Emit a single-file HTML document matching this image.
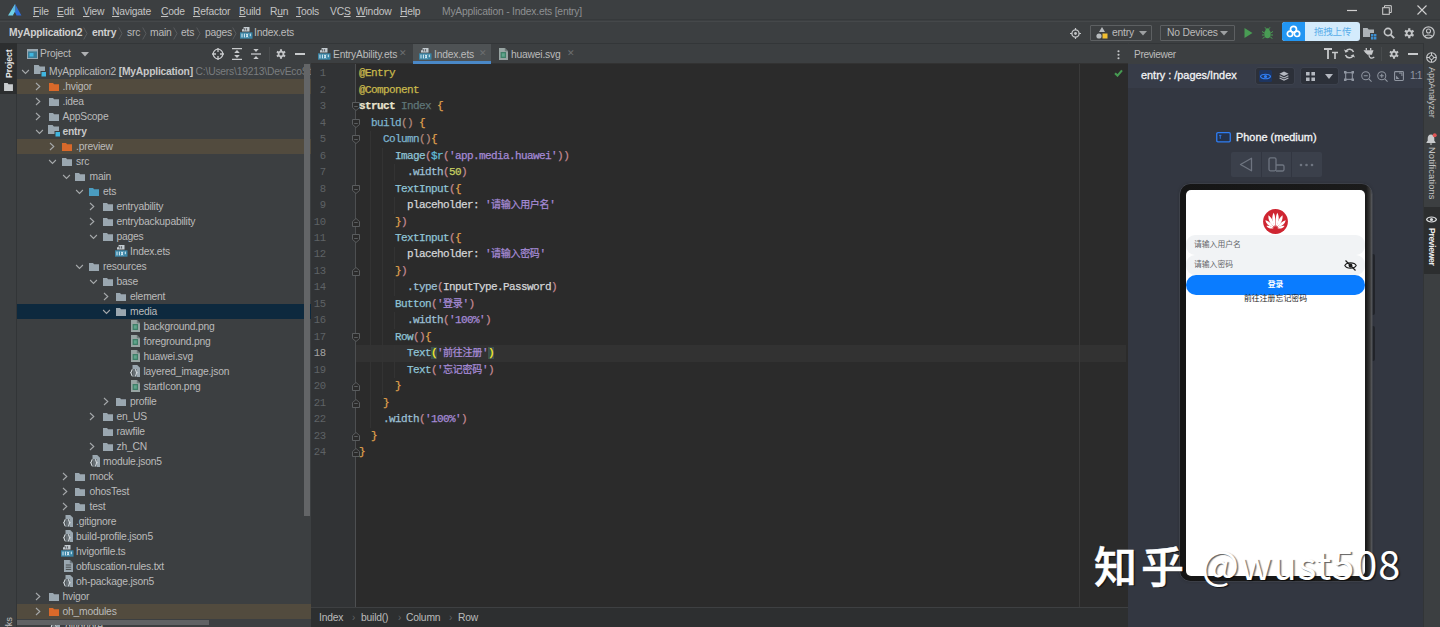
<!DOCTYPE html>
<html lang="zh">
<head>
<meta charset="utf-8">
<title>MyApplication - Index.ets [entry]</title>
<style>
*{box-sizing:border-box}
html,body{margin:0;padding:0}
body{width:1440px;height:627px;overflow:hidden;position:relative;background:#3c3f41;color:#bbbbbb;
 font-family:"Liberation Sans","Noto Sans CJK SC",sans-serif;font-size:10.3px;line-height:15px}
.abs{position:absolute}
.ic{position:absolute;display:block}
/* menubar */
#menubar{position:absolute;left:0;top:0;width:1440px;height:22px;background:#3c3f41}
#menubar span{position:absolute;top:4px;font-size:10.3px;color:#c4c4c4;white-space:nowrap;letter-spacing:-.2px}
#menubar u{text-decoration:underline;text-underline-offset:1px}
#menubar .ttl{color:#8e9092}
#navbar{position:absolute;left:0;top:22px;width:1440px;height:21px;background:#3c3f41;border-top:1px solid transparent}
#navline{position:absolute;left:0;top:19px;width:1440px;height:1px;background:#36393b}
#navline2{position:absolute;left:0;top:21px;width:1440px;height:1px;background:#45484a}
#navbar span{position:absolute;top:1.5px;font-size:10.3px;color:#bbbbbb;white-space:nowrap;letter-spacing:-.2px}
#navbar b{color:#d0d0d0}
#navbar .sep{color:#6e7173;font-size:12px;top:1px}
/* left strip */
#lstrip{position:absolute;left:0;top:43px;width:17px;height:584px;background:#3c3f41;border-right:1px solid #323537}
#lstrip .seltab{position:absolute;left:0;top:0;width:17px;height:51px;background:#2c2e2f}
.vtxt{position:absolute;white-space:nowrap;font-size:10.3px;transform-origin:0 0}
/* project panel */
#proj{position:absolute;left:17px;top:43px;width:294px;height:584px;background:#3c3f41;overflow:hidden}
#projhead{position:absolute;left:0;top:0;width:294px;height:21px;background:#3c3f41;border-top:1px solid #333638}
#tree{position:absolute;left:-17px;top:-43px;width:328px;height:700px}
.row{position:absolute;left:17px;width:294px;height:15px;margin-left:-17px;padding-left:0}
.row{left:17px;margin-left:0}
.row .ic{margin-left:-17px}
.row .t{position:absolute;top:0;margin-left:-17px;white-space:nowrap;font-size:10.3px;line-height:15px;color:#bbbbbb;letter-spacing:-.2px}
.row b{color:#c8c8c8}
.row.ex{background:#524b3e}
.row.sel{background:#0d293e}
.pth{color:#7a7d7f}
/* editor */
#tabs{position:absolute;left:311px;top:43px;width:817px;height:21px;background:#3c3f41;border-top:1px solid #333638;border-bottom:1px solid #323232}
#tabs span{position:absolute;top:3px;font-size:10.3px;white-space:nowrap;letter-spacing:-.2px;color:#bbbbbb}
#tabs .x{color:#6c6f71;font-size:9px;top:2px}
#tabs .act{position:absolute;left:101.5px;top:0;width:78.5px;height:20px;background:#4e5254;border-bottom:3px solid #4a88c7}
#editor{position:absolute;left:311px;top:64px;width:817px;height:543px;background:#2b2b2b;overflow:hidden}
#gutter{position:absolute;left:0;top:0;width:45px;height:543px;background:#313335;border-right:1px solid #4d4f51}
#curline{position:absolute;left:45px;top:281.3px;width:770px;height:16.5px;background:#323232}
#margin{position:absolute;left:768px;top:0;width:1px;height:543px;background:#3a3a3a}
.ln{position:absolute;left:0;width:14.500px;margin-top:-64px;text-align:right;font-family:"Liberation Mono",monospace;font-size:10.6px;letter-spacing:-.5px;line-height:16.5px;color:#5e6265}
.ln.cur{color:#a4a3a3}
.fd{position:absolute;left:40.5px;margin-top:-64px}
.cl{position:absolute;left:48px;margin-top:-64px;white-space:pre;font-family:"Liberation Mono","Noto Sans CJK SC",monospace;font-size:11px;letter-spacing:-.6px;line-height:16.5px;color:#c8ccd0}
.cj{font-size:10px;letter-spacing:-.3px}
.cl{-webkit-text-stroke:.25px}
.an{color:#c7b84c}.kw{color:#e8e2cd;font-weight:bold}.un{color:#5f7678}.b1{color:#e0a34e}.b2{color:#b58a7e}.b3{color:#c58a93}.b4{color:#c58a93}
.fn{color:#7db5cf}.cm{color:#8fc4d6}.rr{color:#62bcd8}.st{color:#a58ad6}.pr{color:#9cc0d6}.nu{color:#c6cf62}.id{color:#d4d6d8}
.bm{color:#ffef28;background:#3b514d}
.guide{position:absolute;width:1px;background:#333333}
#crumbs{position:absolute;left:311px;top:607px;width:817px;height:20px;background:#2d2f30;border-top:1px solid #3e4042}
#crumbs span{position:absolute;top:2px;font-size:10.3px;color:#bbbbbb;letter-spacing:-.2px}
#crumbs .s{color:#606366;font-size:10px}
/* previewer */
#pvhead{position:absolute;left:1128px;top:43px;width:295px;height:21px;background:#3c3f41;border-top:1px solid #333638;border-left:1px solid transparent}
#pvbar{position:absolute;left:1128px;top:64px;width:295px;height:24px;background:#373c48;border-left:1px solid transparent}
#pvbody{position:absolute;left:1128px;top:88px;width:295px;height:539px;background:#333741;border-left:1px solid transparent;border-top:1px solid transparent}
#rstrip{position:absolute;left:1423px;top:43px;width:18px;height:584px;background:#3c3f41;border-left:1px solid #323537}
#rstrip .seltab{position:absolute;left:0;top:163.5px;width:18px;height:67.5px;background:#2c2e2f}
</style>
</head>
<body>
<!-- MENU BAR -->
<div id="menubar">
 <svg class="ic" style="left:8.300px;top:4.200px" width="13.400" height="11.600" viewBox="0 0 13.400 11.600"><path d="M7.100 0L0 11.600h5.200l1.900-3.300z" fill="#6fd0e6"/><path d="M7.100 0l6.300 11.600H8.300L6.600 8.300 8.300 5.400z" fill="#2f6fdb"/><path d="M7.100 0L4.200 4.900l2.900 3.400 1.400-2.600z" fill="#4aa3e3" opacity=".55"/><path d="M6.700 8.100l2 3.500H4.900z" fill="#3c3f41"/></svg>
 <span style="left:33px"><u>F</u>ile</span><span style="left:57px"><u>E</u>dit</span><span style="left:83px"><u>V</u>iew</span><span style="left:112px"><u>N</u>avigate</span><span style="left:161px"><u>C</u>ode</span><span style="left:193px"><u>R</u>efactor</span><span style="left:239px"><u>B</u>uild</span><span style="left:270px">R<u>u</u>n</span><span style="left:296px"><u>T</u>ools</span><span style="left:330px">VC<u>S</u></span><span style="left:356px"><u>W</u>indow</span><span style="left:400px"><u>H</u>elp</span>
 <span class="ttl" style="left:442px">MyApplication - Index.ets [entry]</span>
 <svg class="ic" style="left:1347px;top:5px" width="10" height="10" viewBox="0 0 10 10"><path d="M0 5.5h10" stroke="#d0d0d0" stroke-width="1.2"/></svg>
 <svg class="ic" style="left:1382px;top:5px" width="10" height="10" viewBox="0 0 10 10"><path d="M2.5 2.5V.7h6.8v6.8H7.5" stroke="#d0d0d0" fill="none"/><rect x=".7" y="2.7" width="6.6" height="6.6" stroke="#d0d0d0" fill="none"/></svg>
 <svg class="ic" style="left:1417px;top:5px" width="10" height="10" viewBox="0 0 10 10"><path d="M.5.5l9 9M9.5.5l-9 9" stroke="#d0d0d0" stroke-width="1.1"/></svg>
</div>
<div id="navline"></div><div id="navline2"></div>
<!-- NAV BAR -->
<div id="navbar">
 <span style="left:9px"><b>MyApplication2</b></span><svg class="ic" style="left:83px;top:4px" width="5" height="13" viewBox="0 0 5 13"><path d="M.7.5l3.300 6-3.300 6" stroke="#585b5d" stroke-width="1" fill="none"/></svg>
 <span style="left:92px"><b>entry</b></span><svg class="ic" style="left:118px;top:4px" width="5" height="13" viewBox="0 0 5 13"><path d="M.7.5l3.300 6-3.300 6" stroke="#585b5d" stroke-width="1" fill="none"/></svg>
 <span style="left:127px">src</span><svg class="ic" style="left:142px;top:4px" width="5" height="13" viewBox="0 0 5 13"><path d="M.7.5l3.300 6-3.300 6" stroke="#585b5d" stroke-width="1" fill="none"/></svg>
 <span style="left:150px">main</span><svg class="ic" style="left:173px;top:4px" width="5" height="13" viewBox="0 0 5 13"><path d="M.7.5l3.300 6-3.300 6" stroke="#585b5d" stroke-width="1" fill="none"/></svg>
 <span style="left:181px">ets</span><svg class="ic" style="left:196px;top:4px" width="5" height="13" viewBox="0 0 5 13"><path d="M.7.5l3.300 6-3.300 6" stroke="#585b5d" stroke-width="1" fill="none"/></svg>
 <span style="left:205px">pages</span><svg class="ic" style="left:232px;top:4px" width="5" height="13" viewBox="0 0 5 13"><path d="M.7.5l3.300 6-3.300 6" stroke="#585b5d" stroke-width="1" fill="none"/></svg>
 <svg class="ic" style="left:240px;top:4px" width="12.500" height="12" viewBox="0 0 12.500 12"><path d="M2 4.600V2.300h1.600V0h5.900v4.600z" fill="#c3cbd0"/><path d="M4.700 1.200v2.300M6.600 1.200v2.300" stroke="#3c3f41" stroke-width=".800"/><rect x="0" y="5.300" width="12.500" height="6.400" fill="#3a85a6"/><path d="M2 6.600v3.800M4.400 6.600v3.800M6.200 6.600l1.800 3.800M8 6.600l-1.800 3.800M10.300 6.600v2.600" stroke="#d9edf6" stroke-width="1"/></svg>
 <span style="left:254px">Index.ets</span>
 
 <svg class="ic" style="left:1070px;top:5px" width="11" height="11" viewBox="0 0 11 11"><circle cx="5.5" cy="5.5" r="3.6" stroke="#c4c6c8" stroke-width="1.3" fill="none"/><circle cx="5.5" cy="5.5" r="1.4" fill="#c4c6c8"/><path d="M5.5 0v2M5.5 9v2M0 5.5h2M9 5.5h2" stroke="#c4c6c8" stroke-width="1.2"/></svg>
 <div class="abs" style="left:1090px;top:2px;width:62px;height:16px;border:1px solid #5d6062;border-radius:1px"></div>
 <svg class="ic" style="left:1096px;top:4px" width="12" height="12" viewBox="0 0 12 12"><path d="M6 0l3 5H3z" fill="#b8bcbf"/><circle cx="3" cy="9" r="2.6" fill="#b8bcbf"/><rect x="6.5" y="6.5" width="5" height="5" fill="#f2c032"/></svg>
 <span style="left:1112px">entry</span>
 <svg class="ic" style="left:1139px;top:8px" width="8" height="5" viewBox="0 0 8 5"><path d="M0 0h8L4 4.5z" fill="#9da0a2"/></svg>
 <div class="abs" style="left:1160px;top:2px;width:75px;height:16px;border:1px solid #5d6062;border-radius:1px"></div>
 <span style="left:1167px">No Devices</span>
 <svg class="ic" style="left:1220px;top:8px" width="8" height="5" viewBox="0 0 8 5"><path d="M0 0h8L4 4.5z" fill="#9da0a2"/></svg>
 <svg class="ic" style="left:1244px;top:5px" width="9" height="10" viewBox="0 0 9 10"><path d="M.5 0l8 5-8 5z" fill="#499c54"/></svg>
 <svg class="ic" style="left:1262px;top:4px" width="11" height="12" viewBox="0 0 11 12"><ellipse cx="5.5" cy="7" rx="3.2" ry="4.2" fill="#499c54"/><path d="M3.3 3.4a2.2 2.2 0 014.4 0z" fill="#499c54"/><path d="M0 4.5l2.5 1.5M11 4.5L8.500 6M0 8h2.400M11 8H8.600M.6 11.500l2.200-1.600M10.400 11.500l-2.200-1.600M3 .3l1.100 1.500M8 .3L6.900 1.800" stroke="#499c54" stroke-width="1"/></svg>
 <div class="abs" style="left:1282px;top:-1px;width:78px;height:19px;background:#d3ebfc;border-radius:3px"></div>
 <div class="abs" style="left:1282px;top:-1px;width:23px;height:19px;background:#2296f3;border-radius:3px 0 0 3px"></div>
 <svg class="ic" style="left:1286px;top:2px" width="15" height="13" viewBox="0 0 15 13"><circle cx="7.500" cy="4.300" r="3" stroke="#fff" stroke-width="1.700" fill="none"/><circle cx="4" cy="8.800" r="2.700" stroke="#fff" stroke-width="1.700" fill="none"/><circle cx="11" cy="8.800" r="2.700" stroke="#fff" stroke-width="1.700" fill="none"/></svg>
 <span style="left:1314px;top:1px;font-size:9.500px;color:#5aaeea;letter-spacing:-.2px">拖拽上传</span>
 <svg class="ic" style="left:1363px;top:5px" width="14" height="12" viewBox="0 0 14 12"><path d="M0 0h4.500l1.200 1.500H11V9H0z" fill="#aeb3b7"/><rect x="7" y="5" width="7" height="7" fill="#3c3f41"/><path d="M8 6h2.400v2.400H8zM11 6h2.400v2.400H11zM8 9h2.400v2.400H8zM11 9h2.400v2.400H11z" fill="#3d8fd1"/></svg>
 <svg class="ic" style="left:1383px;top:4px" width="12" height="12" viewBox="0 0 12 12"><circle cx="5" cy="5" r="3.600" stroke="#c4c6c8" stroke-width="1.600" fill="none"/><path d="M7.600 7.600l3.600 3.600" stroke="#c4c6c8" stroke-width="1.900"/></svg>
 <svg class="ic" style="left:1404px;top:5px" width="10.5" height="10.5" viewBox="0 0 11 11"><path d="M4.32 1.99L4.34 0.33L6.66 0.33L6.68 1.99L7.95 2.72L9.40 1.91L10.56 3.92L9.13 4.77L9.13 6.23L10.56 7.08L9.40 9.09L7.95 8.28L6.68 9.01L6.66 10.67L4.34 10.67L4.32 9.01L3.05 8.28L1.60 9.09L0.44 7.08L1.87 6.23L1.87 4.77L0.44 3.92L1.60 1.91L3.05 2.72z" fill="#c4c6c8"/><circle cx="5.5" cy="5.5" r="1.75" fill="#3c3f41"/></svg>
 <svg class="ic" style="left:1422px;top:3px" width="13" height="13" viewBox="0 0 13 13"><circle cx="6.500" cy="6.500" r="5.700" stroke="#c4c6c8" stroke-width="1.200" fill="none"/><circle cx="6.500" cy="5" r="2" stroke="#c4c6c8" stroke-width="1.100" fill="none"/><path d="M2.700 10.600c.8-2.200 6.800-2.200 7.600 0" stroke="#c4c6c8" stroke-width="1.100" fill="none"/></svg>

</div>
<!-- LEFT STRIP -->
<div id="lstrip">
 <div class="seltab"></div>
 <div class="vtxt" style="left:1.5px;top:35px;transform:rotate(-90deg);color:#e8e8e8;font-weight:bold;font-size:8.8px;letter-spacing:-.2px">Project</div>
 <svg class="ic" style="left:4px;top:39.5px" width="9" height="8" viewBox="0 0 10 9"><path d="M0 0h4l1 1.4H10V9H0z" fill="#c8ccce"/></svg>
 <div class="vtxt" style="left:1.5px;top:620px;transform:rotate(-90deg);color:#c0c0c0;font-size:9.2px">Bookmarks</div>
</div>
<!-- PROJECT PANEL -->
<div id="proj">
 <div id="tree">
<div class="row" style="top:64px"><svg class="ic" style="left:21.0px;top:5px" width="9" height="6" viewBox="0 0 9 6"><path d="M1.100 1l3.400 3.400L7.900 1" stroke="#a6a9ab" stroke-width="1.100" fill="none"/></svg><svg class="ic" style="left:34px;top:1px" width="13" height="12" viewBox="0 0 13 12"><path d="M0 0h4.6l1.2 1.4H11V9H0z" fill="#9aa7b0"/><rect x="6.5" y="6" width="6" height="6" fill="#3c3f41"/><rect x="7.5" y="7" width="4.5" height="4.5" fill="#40b6e0"/></svg><span class="t" style="left:49.0px">MyApplication2 <b>[MyApplication]</b> <span class="pth">C:\Users\19213\DevEcoSt</span></span></div>
<div class="row ex" style="top:79px"><svg class="ic" style="left:35.0px;top:3px" width="7" height="9" viewBox="0 0 7 9"><path d="M1 1l3.800 3.500L1 8" stroke="#a6a9ab" stroke-width="1.100" fill="none"/></svg><svg class="ic" style="left:48.5px;top:3.5px" width="10.5" height="8.300" viewBox="0 0 12 10" preserveAspectRatio="none"><path d="M0 0h4.6l1.200 1.400H12V10H0z" fill="#d9692a"/></svg><span class="t" style="left:62.5px">.hvigor</span></div>
<div class="row" style="top:94px"><svg class="ic" style="left:35.0px;top:3px" width="7" height="9" viewBox="0 0 7 9"><path d="M1 1l3.800 3.500L1 8" stroke="#a6a9ab" stroke-width="1.100" fill="none"/></svg><svg class="ic" style="left:48.5px;top:3.5px" width="10.5" height="8.300" viewBox="0 0 12 10" preserveAspectRatio="none"><path d="M0 0h4.6l1.200 1.400H12V10H0z" fill="#9aa7b0"/></svg><span class="t" style="left:62.5px">.idea</span></div>
<div class="row" style="top:109px"><svg class="ic" style="left:35.0px;top:3px" width="7" height="9" viewBox="0 0 7 9"><path d="M1 1l3.800 3.500L1 8" stroke="#a6a9ab" stroke-width="1.100" fill="none"/></svg><svg class="ic" style="left:48.5px;top:3.5px" width="10.5" height="8.300" viewBox="0 0 12 10" preserveAspectRatio="none"><path d="M0 0h4.6l1.200 1.400H12V10H0z" fill="#9aa7b0"/></svg><span class="t" style="left:62.5px">AppScope</span></div>
<div class="row" style="top:124px"><svg class="ic" style="left:34.5px;top:5px" width="9" height="6" viewBox="0 0 9 6"><path d="M1.100 1l3.400 3.400L7.900 1" stroke="#a6a9ab" stroke-width="1.100" fill="none"/></svg><svg class="ic" style="left:48px;top:1px" width="13" height="12" viewBox="0 0 13 12"><path d="M0 0h4.6l1.2 1.4H11V9H0z" fill="#9aa7b0"/><rect x="6.5" y="6" width="6" height="6" fill="#3c3f41"/><rect x="7.5" y="7" width="4.5" height="4.5" fill="#40b6e0"/></svg><span class="t" style="left:62.5px"><b>entry</b></span></div>
<div class="row ex" style="top:139px"><svg class="ic" style="left:48.5px;top:3px" width="7" height="9" viewBox="0 0 7 9"><path d="M1 1l3.800 3.500L1 8" stroke="#a6a9ab" stroke-width="1.100" fill="none"/></svg><svg class="ic" style="left:61.5px;top:3.5px" width="10.5" height="8.300" viewBox="0 0 12 10" preserveAspectRatio="none"><path d="M0 0h4.6l1.200 1.400H12V10H0z" fill="#d9692a"/></svg><span class="t" style="left:76.0px">.preview</span></div>
<div class="row" style="top:154px"><svg class="ic" style="left:48.0px;top:5px" width="9" height="6" viewBox="0 0 9 6"><path d="M1.100 1l3.400 3.400L7.900 1" stroke="#a6a9ab" stroke-width="1.100" fill="none"/></svg><svg class="ic" style="left:61.5px;top:3.5px" width="10.5" height="8.300" viewBox="0 0 12 10" preserveAspectRatio="none"><path d="M0 0h4.6l1.200 1.400H12V10H0z" fill="#9aa7b0"/></svg><span class="t" style="left:76.0px">src</span></div>
<div class="row" style="top:169px"><svg class="ic" style="left:61.5px;top:5px" width="9" height="6" viewBox="0 0 9 6"><path d="M1.100 1l3.400 3.400L7.900 1" stroke="#a6a9ab" stroke-width="1.100" fill="none"/></svg><svg class="ic" style="left:74.5px;top:3.5px" width="10.5" height="8.300" viewBox="0 0 12 10" preserveAspectRatio="none"><path d="M0 0h4.6l1.200 1.400H12V10H0z" fill="#9aa7b0"/></svg><span class="t" style="left:89.5px">main</span></div>
<div class="row" style="top:184px"><svg class="ic" style="left:75.0px;top:5px" width="9" height="6" viewBox="0 0 9 6"><path d="M1.100 1l3.400 3.400L7.900 1" stroke="#a6a9ab" stroke-width="1.100" fill="none"/></svg><svg class="ic" style="left:88.5px;top:3.5px" width="10.5" height="8.300" viewBox="0 0 12 10" preserveAspectRatio="none"><path d="M0 0h4.6l1.200 1.400H12V10H0z" fill="#4a9cc0"/></svg><span class="t" style="left:103.0px">ets</span></div>
<div class="row" style="top:199px"><svg class="ic" style="left:89.0px;top:3px" width="7" height="9" viewBox="0 0 7 9"><path d="M1 1l3.800 3.500L1 8" stroke="#a6a9ab" stroke-width="1.100" fill="none"/></svg><svg class="ic" style="left:102.5px;top:3.5px" width="10.5" height="8.300" viewBox="0 0 12 10" preserveAspectRatio="none"><path d="M0 0h4.6l1.200 1.400H12V10H0z" fill="#9aa7b0"/></svg><span class="t" style="left:116.5px">entryability</span></div>
<div class="row" style="top:214px"><svg class="ic" style="left:89.0px;top:3px" width="7" height="9" viewBox="0 0 7 9"><path d="M1 1l3.800 3.500L1 8" stroke="#a6a9ab" stroke-width="1.100" fill="none"/></svg><svg class="ic" style="left:102.5px;top:3.5px" width="10.5" height="8.300" viewBox="0 0 12 10" preserveAspectRatio="none"><path d="M0 0h4.6l1.200 1.400H12V10H0z" fill="#9aa7b0"/></svg><span class="t" style="left:116.5px">entrybackupability</span></div>
<div class="row" style="top:229px"><svg class="ic" style="left:88.5px;top:5px" width="9" height="6" viewBox="0 0 9 6"><path d="M1.100 1l3.400 3.400L7.900 1" stroke="#a6a9ab" stroke-width="1.100" fill="none"/></svg><svg class="ic" style="left:102.5px;top:3.5px" width="10.5" height="8.300" viewBox="0 0 12 10" preserveAspectRatio="none"><path d="M0 0h4.6l1.200 1.400H12V10H0z" fill="#9aa7b0"/></svg><span class="t" style="left:116.5px">pages</span></div>
<div class="row" style="top:244px"><svg class="ic" style="left:115px;top:1px" width="12.500" height="12" viewBox="0 0 12.500 12"><path d="M2 4.600V2.300h1.600V0h5.900v4.600z" fill="#c3cbd0"/><path d="M4.700 1.200v2.300M6.600 1.200v2.300" stroke="#3c3f41" stroke-width=".800"/><rect x="0" y="5.300" width="12.500" height="6.400" fill="#3a85a6"/><path d="M2 6.600v3.800M4.400 6.600v3.800M6.200 6.600l1.800 3.800M8 6.600l-1.800 3.800M10.300 6.600v2.600" stroke="#d9edf6" stroke-width="1"/></svg><span class="t" style="left:130.0px">Index.ets</span></div>
<div class="row" style="top:259px"><svg class="ic" style="left:75.0px;top:5px" width="9" height="6" viewBox="0 0 9 6"><path d="M1.100 1l3.400 3.400L7.900 1" stroke="#a6a9ab" stroke-width="1.100" fill="none"/></svg><svg class="ic" style="left:88.5px;top:3.5px" width="10.5" height="8.300" viewBox="0 0 12 10" preserveAspectRatio="none"><path d="M0 0h4.6l1.200 1.400H12V10H0z" fill="#9aa7b0"/></svg><span class="t" style="left:103.0px">resources</span></div>
<div class="row" style="top:274px"><svg class="ic" style="left:88.5px;top:5px" width="9" height="6" viewBox="0 0 9 6"><path d="M1.100 1l3.400 3.400L7.900 1" stroke="#a6a9ab" stroke-width="1.100" fill="none"/></svg><svg class="ic" style="left:102.5px;top:3.5px" width="10.5" height="8.300" viewBox="0 0 12 10" preserveAspectRatio="none"><path d="M0 0h4.6l1.200 1.400H12V10H0z" fill="#9aa7b0"/></svg><span class="t" style="left:116.5px">base</span></div>
<div class="row" style="top:289px"><svg class="ic" style="left:102.5px;top:3px" width="7" height="9" viewBox="0 0 7 9"><path d="M1 1l3.800 3.500L1 8" stroke="#a6a9ab" stroke-width="1.100" fill="none"/></svg><svg class="ic" style="left:115.5px;top:3.5px" width="10.5" height="8.300" viewBox="0 0 12 10" preserveAspectRatio="none"><path d="M0 0h4.6l1.200 1.400H12V10H0z" fill="#9aa7b0"/></svg><span class="t" style="left:130.0px">element</span></div>
<div class="row sel" style="top:304px"><svg class="ic" style="left:102.0px;top:5px" width="9" height="6" viewBox="0 0 9 6"><path d="M1.100 1l3.400 3.400L7.900 1" stroke="#a6a9ab" stroke-width="1.100" fill="none"/></svg><svg class="ic" style="left:115.5px;top:3.5px" width="10.5" height="8.300" viewBox="0 0 12 10" preserveAspectRatio="none"><path d="M0 0h4.6l1.200 1.400H12V10H0z" fill="#9aa7b0"/></svg><span class="t" style="left:130.0px">media</span></div>
<div class="row" style="top:319px"><svg class="ic" style="left:131px;top:1px" width="9" height="12" viewBox="0 0 9 12"><path d="M0 0h5.800L9 3.200V12H0z" fill="#98a5a3"/><path d="M5.800 0v3.200H9z" fill="#6d7a78"/><rect x="1.600" y="4" width="5.400" height="6" fill="#3f7f68"/><rect x="2.800" y="5.300" width="3" height="3.400" fill="#5fa58b"/></svg><span class="t" style="left:143.5px">background.png</span></div>
<div class="row" style="top:334px"><svg class="ic" style="left:131px;top:1px" width="9" height="12" viewBox="0 0 9 12"><path d="M0 0h5.800L9 3.200V12H0z" fill="#98a5a3"/><path d="M5.800 0v3.200H9z" fill="#6d7a78"/><rect x="1.600" y="4" width="5.400" height="6" fill="#3f7f68"/><rect x="2.800" y="5.300" width="3" height="3.400" fill="#5fa58b"/></svg><span class="t" style="left:143.5px">foreground.png</span></div>
<div class="row" style="top:349px"><svg class="ic" style="left:131px;top:1px" width="9" height="12" viewBox="0 0 9 12"><path d="M0 0h5.800L9 3.200V12H0z" fill="#98a5a3"/><path d="M5.800 0v3.200H9z" fill="#6d7a78"/><rect x="1.600" y="4" width="5.400" height="6" fill="#3f7f68"/><rect x="2.800" y="5.300" width="3" height="3.400" fill="#5fa58b"/></svg><span class="t" style="left:143.5px">huawei.svg</span></div>
<div class="row" style="top:364px"><svg class="ic" style="left:130px;top:1px" width="10" height="12" viewBox="0 0 10 12"><path d="M2.500 0h4.700L10 2.800V12H2.500z" fill="#9aa7b0"/><path d="M0 4h7v8H0z" fill="#3c3f41" opacity=".55"/><path d="M2.600 4.600c-1.600 0-.6 2.600-1.900 3.200 1.300.6.300 3.200 1.900 3.200M5 4.600c1.600 0 .6 2.600 1.900 3.200-1.300.6-.3 3.200-1.900 3.200" stroke="#d3dade" stroke-width="1.100" fill="none"/></svg><span class="t" style="left:143.5px">layered_image.json</span></div>
<div class="row" style="top:379px"><svg class="ic" style="left:131px;top:1px" width="9" height="12" viewBox="0 0 9 12"><path d="M0 0h5.800L9 3.200V12H0z" fill="#98a5a3"/><path d="M5.800 0v3.200H9z" fill="#6d7a78"/><rect x="1.600" y="4" width="5.400" height="6" fill="#3f7f68"/><rect x="2.800" y="5.300" width="3" height="3.400" fill="#5fa58b"/></svg><span class="t" style="left:143.5px">startIcon.png</span></div>
<div class="row" style="top:394px"><svg class="ic" style="left:102.5px;top:3px" width="7" height="9" viewBox="0 0 7 9"><path d="M1 1l3.800 3.500L1 8" stroke="#a6a9ab" stroke-width="1.100" fill="none"/></svg><svg class="ic" style="left:115.5px;top:3.5px" width="10.5" height="8.300" viewBox="0 0 12 10" preserveAspectRatio="none"><path d="M0 0h4.6l1.200 1.400H12V10H0z" fill="#9aa7b0"/></svg><span class="t" style="left:130.0px">profile</span></div>
<div class="row" style="top:409px"><svg class="ic" style="left:89.0px;top:3px" width="7" height="9" viewBox="0 0 7 9"><path d="M1 1l3.800 3.500L1 8" stroke="#a6a9ab" stroke-width="1.100" fill="none"/></svg><svg class="ic" style="left:102.5px;top:3.5px" width="10.5" height="8.300" viewBox="0 0 12 10" preserveAspectRatio="none"><path d="M0 0h4.6l1.200 1.400H12V10H0z" fill="#9aa7b0"/></svg><span class="t" style="left:116.5px">en_US</span></div>
<div class="row" style="top:424px"><svg class="ic" style="left:102.5px;top:3.5px" width="10.5" height="8.300" viewBox="0 0 12 10" preserveAspectRatio="none"><path d="M0 0h4.6l1.200 1.400H12V10H0z" fill="#9aa7b0"/></svg><span class="t" style="left:116.5px">rawfile</span></div>
<div class="row" style="top:439px"><svg class="ic" style="left:89.0px;top:3px" width="7" height="9" viewBox="0 0 7 9"><path d="M1 1l3.800 3.500L1 8" stroke="#a6a9ab" stroke-width="1.100" fill="none"/></svg><svg class="ic" style="left:102.5px;top:3.5px" width="10.5" height="8.300" viewBox="0 0 12 10" preserveAspectRatio="none"><path d="M0 0h4.6l1.200 1.400H12V10H0z" fill="#9aa7b0"/></svg><span class="t" style="left:116.5px">zh_CN</span></div>
<div class="row" style="top:454px"><svg class="ic" style="left:90px;top:1px" width="10" height="12" viewBox="0 0 10 12"><path d="M2.500 0h4.700L10 2.800V12H2.500z" fill="#9aa7b0"/><path d="M0 4h7v8H0z" fill="#3c3f41" opacity=".55"/><path d="M2.600 4.600c-1.600 0-.6 2.600-1.900 3.200 1.300.6.300 3.200 1.900 3.200M5 4.600c1.600 0 .6 2.600 1.900 3.200-1.300.6-.3 3.200-1.900 3.200" stroke="#d3dade" stroke-width="1.100" fill="none"/></svg><span class="t" style="left:103.0px">module.json5</span></div>
<div class="row" style="top:469px"><svg class="ic" style="left:62.0px;top:3px" width="7" height="9" viewBox="0 0 7 9"><path d="M1 1l3.800 3.500L1 8" stroke="#a6a9ab" stroke-width="1.100" fill="none"/></svg><svg class="ic" style="left:74.5px;top:3.5px" width="10.5" height="8.300" viewBox="0 0 12 10" preserveAspectRatio="none"><path d="M0 0h4.6l1.200 1.400H12V10H0z" fill="#9aa7b0"/></svg><span class="t" style="left:89.5px">mock</span></div>
<div class="row" style="top:484px"><svg class="ic" style="left:62.0px;top:3px" width="7" height="9" viewBox="0 0 7 9"><path d="M1 1l3.800 3.500L1 8" stroke="#a6a9ab" stroke-width="1.100" fill="none"/></svg><svg class="ic" style="left:74.5px;top:3.5px" width="10.5" height="8.300" viewBox="0 0 12 10" preserveAspectRatio="none"><path d="M0 0h4.6l1.200 1.400H12V10H0z" fill="#9aa7b0"/></svg><span class="t" style="left:89.5px">ohosTest</span></div>
<div class="row" style="top:499px"><svg class="ic" style="left:62.0px;top:3px" width="7" height="9" viewBox="0 0 7 9"><path d="M1 1l3.800 3.500L1 8" stroke="#a6a9ab" stroke-width="1.100" fill="none"/></svg><svg class="ic" style="left:74.5px;top:3.5px" width="10.5" height="8.300" viewBox="0 0 12 10" preserveAspectRatio="none"><path d="M0 0h4.6l1.200 1.400H12V10H0z" fill="#9aa7b0"/></svg><span class="t" style="left:89.5px">test</span></div>
<div class="row" style="top:514px"><svg class="ic" style="left:63px;top:1px" width="10" height="12" viewBox="0 0 10 12"><path d="M2.500 0h4.700L10 2.800V12H2.500z" fill="#9aa7b0"/><path d="M0 4h7v8H0z" fill="#3c3f41" opacity=".55"/><path d="M2.600 4.600c-1.600 0-.6 2.600-1.900 3.200 1.300.6.300 3.200 1.900 3.200M5 4.600c1.600 0 .6 2.600 1.900 3.200-1.300.6-.3 3.200-1.900 3.200" stroke="#d3dade" stroke-width="1.100" fill="none"/></svg><span class="t" style="left:76.0px">.gitignore</span></div>
<div class="row" style="top:529px"><svg class="ic" style="left:63px;top:1px" width="10" height="12" viewBox="0 0 10 12"><path d="M2.500 0h4.700L10 2.800V12H2.500z" fill="#9aa7b0"/><path d="M0 4h7v8H0z" fill="#3c3f41" opacity=".55"/><path d="M2.600 4.600c-1.600 0-.6 2.600-1.900 3.200 1.300.6.300 3.200 1.900 3.200M5 4.600c1.600 0 .6 2.600 1.900 3.200-1.300.6-.3 3.200-1.900 3.200" stroke="#d3dade" stroke-width="1.100" fill="none"/></svg><span class="t" style="left:76.0px">build-profile.json5</span></div>
<div class="row" style="top:544px"><svg class="ic" style="left:61px;top:1px" width="12.500" height="12" viewBox="0 0 12.500 12"><path d="M2 4.600V2.300h1.600V0h5.900v4.600z" fill="#c3cbd0"/><path d="M4.700 1.200v2.300M6.600 1.200v2.300" stroke="#3c3f41" stroke-width=".800"/><rect x="0" y="5.300" width="12.500" height="6.400" fill="#3a85a6"/><path d="M2 6.600v3.800M4.400 6.600v3.800M6.200 6.600l1.800 3.800M8 6.600l-1.800 3.800M10.300 6.600v2.600" stroke="#d9edf6" stroke-width="1"/></svg><span class="t" style="left:76.0px">hvigorfile.ts</span></div>
<div class="row" style="top:559px"><svg class="ic" style="left:64px;top:1px" width="9" height="12" viewBox="0 0 9 12"><path d="M0 0h5.800L9 3.200V12H0z" fill="#9aa7b0"/><path d="M5.800 0v3.200H9z" fill="#6d7880"/><path d="M1.800 5h5.400M1.800 7.200h5.400M1.800 9.400h5.400" stroke="#464a4c" stroke-width="1"/></svg><span class="t" style="left:76.0px">obfuscation-rules.txt</span></div>
<div class="row" style="top:574px"><svg class="ic" style="left:63px;top:1px" width="10" height="12" viewBox="0 0 10 12"><path d="M2.500 0h4.700L10 2.800V12H2.500z" fill="#9aa7b0"/><path d="M0 4h7v8H0z" fill="#3c3f41" opacity=".55"/><path d="M2.600 4.600c-1.600 0-.6 2.600-1.900 3.200 1.300.6.300 3.200 1.900 3.200M5 4.600c1.600 0 .6 2.600 1.900 3.200-1.300.6-.3 3.200-1.900 3.200" stroke="#d3dade" stroke-width="1.100" fill="none"/></svg><span class="t" style="left:76.0px">oh-package.json5</span></div>
<div class="row" style="top:589px"><svg class="ic" style="left:35.0px;top:3px" width="7" height="9" viewBox="0 0 7 9"><path d="M1 1l3.800 3.500L1 8" stroke="#a6a9ab" stroke-width="1.100" fill="none"/></svg><svg class="ic" style="left:48.5px;top:3.5px" width="10.5" height="8.300" viewBox="0 0 12 10" preserveAspectRatio="none"><path d="M0 0h4.6l1.200 1.400H12V10H0z" fill="#9aa7b0"/></svg><span class="t" style="left:62.5px">hvigor</span></div>
<div class="row ex" style="top:604px"><svg class="ic" style="left:35.0px;top:3px" width="7" height="9" viewBox="0 0 7 9"><path d="M1 1l3.800 3.500L1 8" stroke="#a6a9ab" stroke-width="1.100" fill="none"/></svg><svg class="ic" style="left:48.5px;top:3.5px" width="10.5" height="8.300" viewBox="0 0 12 10" preserveAspectRatio="none"><path d="M0 0h4.6l1.200 1.400H12V10H0z" fill="#d9692a"/></svg><span class="t" style="left:62.5px">oh_modules</span></div>
<div class="row" style="top:619px"><svg class="ic" style="left:50px;top:1px" width="10" height="12" viewBox="0 0 10 12"><path d="M2.500 0h4.700L10 2.800V12H2.500z" fill="#9aa7b0"/><path d="M0 4h7v8H0z" fill="#3c3f41" opacity=".55"/><path d="M2.600 4.600c-1.600 0-.6 2.600-1.900 3.200 1.300.6.300 3.200 1.900 3.200M5 4.600c1.600 0 .6 2.600 1.900 3.200-1.300.6-.3 3.200-1.900 3.200" stroke="#d3dade" stroke-width="1.100" fill="none"/></svg><span class="t" style="left:62.5px">.gitignore</span></div>
 </div>
 <div id="projhead">
  <svg class="ic" style="left:10px;top:5px" width="11" height="10" viewBox="0 0 11 10"><rect x=".5" y=".5" width="10" height="9" fill="#3c7d96" stroke="#9aa7b0"/><rect x="0" y="0" width="11" height="2.4" fill="#9aa7b0"/><rect x="2.5" y="4" width="4" height="3.5" fill="#40b6e0"/></svg>
  <span class="abs" style="left:23px;top:2px;font-size:10.3px;letter-spacing:-.2px">Project</span>
  <svg class="ic" style="left:64px;top:8px" width="8" height="5" viewBox="0 0 8 5"><path d="M0 0h8L4 4.5z" fill="#afb1b3"/></svg>
  
  <svg class="ic" style="left:195px;top:4px" width="12" height="12" viewBox="0 0 12 12"><circle cx="6" cy="6" r="4.800" stroke="#c8cacc" stroke-width="1.300" fill="none"/><path d="M6 0v4M6 8v4M0 6h4M8 6h4" stroke="#c8cacc" stroke-width="1.300"/></svg>
  <svg class="ic" style="left:215px;top:4px" width="10" height="12" viewBox="0 0 10 12"><path d="M0 .600h10M0 11.400h10" stroke="#c8cacc" stroke-width="1.300"/><path d="M2.500 4.800L5 2.300l2.500 2.500M2.500 7.200L5 9.700l2.500-2.500" fill="#c8cacc" stroke="none"/><path d="M2.300 5h5.400L5 2.200zM2.300 7h5.400L5 9.800z" fill="#c8cacc"/></svg>
  <svg class="ic" style="left:234px;top:4px" width="10" height="12" viewBox="0 0 10 12"><path d="M0 6h10" stroke="#c8cacc" stroke-width="1.300"/><path d="M2.300 1h5.400L5 3.900zM2.300 11h5.400L5 8.100z" fill="#c8cacc"/></svg>
  <div class="abs" style="left:252px;top:3px;width:1px;height:14px;background:#484b4d"></div>
  <svg class="ic" style="left:259px;top:5px" width="10" height="10" viewBox="0 0 11 11"><path d="M4.32 1.99L4.34 0.33L6.66 0.33L6.68 1.99L7.95 2.72L9.40 1.91L10.56 3.92L9.13 4.77L9.13 6.23L10.56 7.08L9.40 9.09L7.95 8.28L6.68 9.01L6.66 10.67L4.34 10.67L4.32 9.01L3.05 8.28L1.60 9.09L0.44 7.08L1.87 6.23L1.87 4.77L0.44 3.92L1.60 1.91L3.05 2.72z" fill="#c4c6c8"/><circle cx="5.5" cy="5.5" r="1.75" fill="#3c3f41"/></svg>
  <div class="abs" style="left:278px;top:9px;width:10px;height:1.500px;background:#c8cacc"></div>

 </div>
 <!-- scrollbars -->
 <div class="abs" style="left:287px;top:21px;width:6px;height:452px;background:#636567"></div>
 <div class="abs" style="left:0;top:576.500px;width:192px;height:5.500px;background:#606264"></div>
</div>
<!-- EDITOR TABS -->
<div id="tabs">
 <div class="act"></div>
 <svg class="ic" style="left:7px;top:4px" width="12.500" height="12" viewBox="0 0 12.500 12"><path d="M2 4.600V2.300h1.600V0h5.900v4.600z" fill="#c3cbd0"/><path d="M4.700 1.200v2.300M6.600 1.200v2.300" stroke="#3c3f41" stroke-width=".800"/><rect x="0" y="5.300" width="12.500" height="6.400" fill="#3a85a6"/><path d="M2 6.600v3.800M4.400 6.600v3.800M6.200 6.600l1.800 3.800M8 6.600l-1.800 3.800M10.300 6.600v2.600" stroke="#d9edf6" stroke-width="1"/></svg>
 <span style="left:22px">EntryAbility.ets</span><span class="x" style="left:88px">✕</span>
 <svg class="ic" style="left:108px;top:4px" width="12.500" height="12" viewBox="0 0 12.500 12"><path d="M2 4.600V2.300h1.600V0h5.900v4.600z" fill="#c3cbd0"/><path d="M4.700 1.200v2.300M6.600 1.200v2.300" stroke="#3c3f41" stroke-width=".800"/><rect x="0" y="5.300" width="12.500" height="6.400" fill="#3a85a6"/><path d="M2 6.600v3.800M4.400 6.600v3.800M6.200 6.600l1.800 3.800M8 6.600l-1.800 3.800M10.300 6.600v2.600" stroke="#d9edf6" stroke-width="1"/></svg>
 <span style="left:123px">Index.ets</span><span class="x" style="left:168px">✕</span>
 <svg class="ic" style="left:188px;top:4px" width="9" height="12" viewBox="0 0 9 12"><path d="M0 0h5.800L9 3.200V12H0z" fill="#98a5a3"/><path d="M5.800 0v3.200H9z" fill="#6d7a78"/><rect x="1.600" y="4" width="5.400" height="6" fill="#3f7f68"/><rect x="2.800" y="5.300" width="3" height="3.400" fill="#5fa58b"/></svg>
 <span style="left:200px">huawei.svg</span><span class="x" style="left:256px">✕</span>
 <svg class="ic" style="left:806.300px;top:5.900px" width="3" height="10" viewBox="0 0 3 10"><circle cx="1.500" cy="1.300" r="1.050" fill="#c6c8ca"/><circle cx="1.500" cy="4.800" r="1.050" fill="#c6c8ca"/><circle cx="1.500" cy="8.300" r="1.050" fill="#c6c8ca"/></svg>
</div>
<!-- EDITOR -->
<div id="editor">
 <div id="curline"></div>
 <div id="margin"></div>
 <div id="gutter"></div>
<div class="ln" style="top:65.20px">1</div>
<div class="ln" style="top:81.68px">2</div>
<div class="ln" style="top:98.16px">3</div>
<div class="ln" style="top:114.64px">4</div>
<div class="ln" style="top:131.12px">5</div>
<div class="ln" style="top:147.60px">6</div>
<div class="ln" style="top:164.08px">7</div>
<div class="ln" style="top:180.56px">8</div>
<div class="ln" style="top:197.04px">9</div>
<div class="ln" style="top:213.52px">10</div>
<div class="ln" style="top:230.00px">11</div>
<div class="ln" style="top:246.48px">12</div>
<div class="ln" style="top:262.96px">13</div>
<div class="ln" style="top:279.44px">14</div>
<div class="ln" style="top:295.92px">15</div>
<div class="ln" style="top:312.40px">16</div>
<div class="ln" style="top:328.88px">17</div>
<div class="ln cur" style="top:345.36px">18</div>
<div class="ln" style="top:361.84px">19</div>
<div class="ln" style="top:378.32px">20</div>
<div class="ln" style="top:394.80px">21</div>
<div class="ln" style="top:411.28px">22</div>
<div class="ln" style="top:427.76px">23</div>
<div class="ln" style="top:444.24px">24</div>

<svg class="fd" style="top:102.2px" width="8" height="9" viewBox="0 0 8 9"><path d="M.5 .5h7v5L4 8.5.5 5.5z" fill="#2b2b2b" stroke="#5a5d5f"/><path d="M2.2 4.5h3.6" stroke="#5a5d5f"/></svg>
<svg class="fd" style="top:118.6px" width="8" height="9" viewBox="0 0 8 9"><path d="M.5 .5h7v5L4 8.5.5 5.5z" fill="#2b2b2b" stroke="#5a5d5f"/><path d="M2.2 4.5h3.6" stroke="#5a5d5f"/></svg>
<svg class="fd" style="top:135.1px" width="8" height="9" viewBox="0 0 8 9"><path d="M.5 .5h7v5L4 8.5.5 5.5z" fill="#2b2b2b" stroke="#5a5d5f"/><path d="M2.2 4.5h3.6" stroke="#5a5d5f"/></svg>
<svg class="fd" style="top:184.6px" width="8" height="9" viewBox="0 0 8 9"><path d="M.5 .5h7v5L4 8.5.5 5.5z" fill="#2b2b2b" stroke="#5a5d5f"/><path d="M2.2 4.5h3.6" stroke="#5a5d5f"/></svg>
<svg class="fd" style="top:217.5px" width="8" height="9" viewBox="0 0 8 9"><path d="M.5 8.5h7v-5L4 .5.5 3.5z" fill="#2b2b2b" stroke="#5a5d5f"/><path d="M2.2 4.5h3.6" stroke="#5a5d5f"/></svg>
<svg class="fd" style="top:234.0px" width="8" height="9" viewBox="0 0 8 9"><path d="M.5 .5h7v5L4 8.5.5 5.5z" fill="#2b2b2b" stroke="#5a5d5f"/><path d="M2.2 4.5h3.6" stroke="#5a5d5f"/></svg>
<svg class="fd" style="top:267.0px" width="8" height="9" viewBox="0 0 8 9"><path d="M.5 8.5h7v-5L4 .5.5 3.5z" fill="#2b2b2b" stroke="#5a5d5f"/><path d="M2.2 4.5h3.6" stroke="#5a5d5f"/></svg>
<svg class="fd" style="top:332.9px" width="8" height="9" viewBox="0 0 8 9"><path d="M.5 .5h7v5L4 8.5.5 5.5z" fill="#2b2b2b" stroke="#5a5d5f"/><path d="M2.2 4.5h3.6" stroke="#5a5d5f"/></svg>
<svg class="fd" style="top:382.3px" width="8" height="9" viewBox="0 0 8 9"><path d="M.5 8.5h7v-5L4 .5.5 3.5z" fill="#2b2b2b" stroke="#5a5d5f"/><path d="M2.2 4.5h3.6" stroke="#5a5d5f"/></svg>
<svg class="fd" style="top:398.8px" width="8" height="9" viewBox="0 0 8 9"><path d="M.5 8.5h7v-5L4 .5.5 3.5z" fill="#2b2b2b" stroke="#5a5d5f"/><path d="M2.2 4.5h3.6" stroke="#5a5d5f"/></svg>
<svg class="fd" style="top:431.8px" width="8" height="9" viewBox="0 0 8 9"><path d="M.5 8.5h7v-5L4 .5.5 3.5z" fill="#2b2b2b" stroke="#5a5d5f"/><path d="M2.2 4.5h3.6" stroke="#5a5d5f"/></svg>
<svg class="fd" style="top:448.2px" width="8" height="9" viewBox="0 0 8 9"><path d="M.5 8.5h7v-5L4 .5.5 3.5z" fill="#2b2b2b" stroke="#5a5d5f"/><path d="M2.2 4.5h3.6" stroke="#5a5d5f"/></svg>
<div class="guide" style="left:59px;top:67.1px;height:296.6px"></div>
<div class="guide" style="left:71px;top:83.6px;height:247.2px"></div>
<div class="guide" style="left:83px;top:100.1px;height:16.5px"></div>
<div class="guide" style="left:83px;top:133.0px;height:16.5px"></div>
<div class="guide" style="left:83px;top:182.5px;height:16.5px"></div>
<div class="guide" style="left:83px;top:215.4px;height:16.5px"></div>
<div class="guide" style="left:83px;top:248.4px;height:16.5px"></div>
<div class="guide" style="left:83px;top:281.4px;height:33.0px"></div>

<div class="cl" style="top:65.20px"><span class="an">@Entry</span></div>
<div class="cl" style="top:81.68px"><span class="an">@Component</span></div>
<div class="cl" style="top:98.16px"><span class="kw">struct</span> <span class="un">Index</span> <span class="b1">{</span></div>
<div class="cl" style="top:114.64px">  <span class="fn">build</span><span class="b2">()</span> <span class="b1">{</span></div>
<div class="cl" style="top:131.12px">    <span class="fn">Column</span><span class="b2">()</span><span class="b1">{</span></div>
<div class="cl" style="top:147.60px">      <span class="cm">Image</span><span class="b3">(</span><span class="rr">$r</span><span class="b4">(</span><span class="st">'app.media.huawei'</span><span class="b4">)</span><span class="b3">)</span></div>
<div class="cl" style="top:164.08px">        <span class="pr">.width</span><span class="b3">(</span><span class="nu">50</span><span class="b3">)</span></div>
<div class="cl" style="top:180.56px">      <span class="cm">TextInput</span><span class="b3">(</span><span class="b1">{</span></div>
<div class="cl" style="top:197.04px">        <span class="id">placeholder:</span> <span class="st">'<span class="cj">请输入用户名</span>'</span></div>
<div class="cl" style="top:213.52px">      <span class="b1">}</span><span class="b3">)</span></div>
<div class="cl" style="top:230.00px">      <span class="cm">TextInput</span><span class="b3">(</span><span class="b1">{</span></div>
<div class="cl" style="top:246.48px">        <span class="id">placeholder:</span> <span class="st">'<span class="cj">请输入密码</span>'</span></div>
<div class="cl" style="top:262.96px">      <span class="b1">}</span><span class="b3">)</span></div>
<div class="cl" style="top:279.44px">        <span class="pr">.type</span><span class="b3">(</span><span class="id">InputType.Password</span><span class="b3">)</span></div>
<div class="cl" style="top:295.92px">      <span class="cm">Button</span><span class="b3">(</span><span class="st">'<span class="cj">登录</span>'</span><span class="b3">)</span></div>
<div class="cl" style="top:312.40px">        <span class="pr">.width</span><span class="b3">(</span><span class="st">'100%'</span><span class="b3">)</span></div>
<div class="cl" style="top:328.88px">      <span class="cm">Row</span><span class="b3">()</span><span class="b1">{</span></div>
<div class="cl" style="top:345.36px">        <span class="cm">Text</span><span class="bm">(</span><span class="st">'<span class="cj">前往注册</span>'</span><span class="bm">)</span></div>
<div class="cl" style="top:361.84px">        <span class="cm">Text</span><span class="b3">(</span><span class="st">'<span class="cj">忘记密码</span>'</span><span class="b3">)</span></div>
<div class="cl" style="top:378.32px">      <span class="b1">}</span></div>
<div class="cl" style="top:394.80px">    <span class="b1">}</span></div>
<div class="cl" style="top:411.28px">    <span class="pr">.width</span><span class="b3">(</span><span class="st">'100%'</span><span class="b3">)</span></div>
<div class="cl" style="top:427.76px">  <span class="b1">}</span></div>
<div class="cl" style="top:444.24px"><span class="b1">}</span></div>

 <svg class="ic" style="left:803px;top:5px" width="9" height="8" viewBox="0 0 9 8"><path d="M1 4.200l2.500 2.400L8 1.400" stroke="#479a52" stroke-width="2.100" fill="none"/></svg>
</div>
<div id="crumbs">
 <span style="left:8px">Index</span><span class="s" style="left:41px">›</span>
 <span style="left:50px">build()</span><span class="s" style="left:87px">›</span>
 <span style="left:95px">Column</span><span class="s" style="left:138px">›</span>
 <span style="left:147px">Row</span>
</div>
<!-- PREVIEWER -->
<div id="pvhead">
 <span class="abs" style="left:5px;top:3px;font-size:10.1px;letter-spacing:-.35px">Previewer</span>
 
 <svg class="ic" style="left:195px;top:4px" width="14" height="11" viewBox="0 0 14 11"><path d="M0 1h8M4 1v10" stroke="#c8cacc" stroke-width="1.800"/><path d="M8 4.500h6M11 4.500V11" stroke="#c8cacc" stroke-width="1.600"/></svg>
 <svg class="ic" style="left:215px;top:4px" width="11" height="11" viewBox="0 0 11 11"><path d="M9.500 4A4.200 4.200 0 002 3.200M1.500 7A4.200 4.200 0 009 7.800" stroke="#c8cacc" stroke-width="1.500" fill="none"/><path d="M0 1.500l1.500 3.300 3-1.600zM11 9.500L9.500 6.200l-3 1.600z" fill="#c8cacc"/></svg>
 <svg class="ic" style="left:234px;top:4px" width="12" height="12" viewBox="0 0 12 12"><path d="M.500 2.200h10l-1.600 4.600H4.500L2.100 4.600z" fill="#c8cacc"/><path d="M3.300 0v2.400M7.700 0v2.400" stroke="#c8cacc" stroke-width="1.300"/><path d="M6 6.800c0 3.200 2.300 4.300 5.300 2.200" stroke="#c8cacc" stroke-width="1.200" fill="none"/></svg>
 <div class="abs" style="left:252px;top:3px;width:1px;height:14px;background:#484b4d"></div>
 <svg class="ic" style="left:259.5px;top:5px" width="10" height="10" viewBox="0 0 11 11"><path d="M4.32 1.99L4.34 0.33L6.66 0.33L6.68 1.99L7.95 2.72L9.40 1.91L10.56 3.92L9.13 4.77L9.13 6.23L10.56 7.08L9.40 9.09L7.95 8.28L6.68 9.01L6.66 10.67L4.34 10.67L4.32 9.01L3.05 8.28L1.60 9.09L0.44 7.08L1.87 6.23L1.87 4.77L0.44 3.92L1.60 1.91L3.05 2.72z" fill="#c4c6c8"/><circle cx="5.5" cy="5.5" r="1.75" fill="#3c3f41"/></svg>
 <div class="abs" style="left:279px;top:9px;width:10px;height:1.500px;background:#c8cacc"></div>

</div>
<div id="pvbar">
 
 <span class="abs" style="left:12px;top:4px;font-size:10.9px;line-height:15px;color:#f2f3f5;-webkit-text-stroke:.3px #f2f3f5;white-space:nowrap">entry : /pages/Index</span>
 <div class="abs" style="left:127px;top:4px;width:38px;height:16px;background:#2c3039;border-radius:2px;box-shadow:0 0 0 .500px #424753"></div>
 <div class="abs" style="left:130px;top:6px;width:13px;height:12px;background:#1e3560;border-radius:1.500px"></div>
 <svg class="ic" style="left:131px;top:7.500px" width="11" height="9" viewBox="0 0 13 10"><path d="M.500 5C2 1.500 11 1.500 12.500 5 11 8.500 2 8.500.500 5z" stroke="#2f7df2" stroke-width="1.400" fill="none"/><circle cx="6.500" cy="5" r="1.900" fill="#2f7df2"/></svg>
 <svg class="ic" style="left:150px;top:7px" width="10" height="10" viewBox="0 0 12 12"><path d="M6 .500l5.500 2.700L6 5.900.500 3.200z" fill="#b4b8c0"/><path d="M.700 5.700L6 8.300l5.300-2.600M.700 8.300L6 10.900l5.300-2.600" stroke="#b4b8c0" stroke-width="1.300" fill="none"/></svg>
 <div class="abs" style="left:172px;top:4px;width:37px;height:16px;background:#2c3039;border-radius:2px;box-shadow:0 0 0 .500px #424753"></div>
 <svg class="ic" style="left:176.500px;top:7.500px" width="9" height="9" viewBox="0 0 10 10"><path d="M0 0h4v4H0zM6 0h4v4H6zM0 6h4v4H0zM6 6h4v4H6z" fill="#b4b8c0"/></svg>
 <svg class="ic" style="left:195.500px;top:9.500px" width="8" height="5" viewBox="0 0 10 6"><path d="M0 0h10L5 6z" fill="#b4b8c0"/></svg>
 <svg class="ic" style="left:215px;top:7px" width="10" height="10" viewBox="0 0 12 12"><rect x="2" y="2" width="8" height="8" stroke="#9096a1" stroke-width="1.300" fill="none"/><path d="M0 0h3v3H0zM9 0h3v3H9zM0 9h3v3H0zM9 9h3v3H9z" fill="#9096a1"/></svg>
 <svg class="ic" style="left:231.500px;top:6.500px" width="11" height="11" viewBox="0 0 12 12"><circle cx="5.200" cy="5.200" r="4.400" stroke="#9096a1" stroke-width="1.100" fill="none"/><path d="M3 5.200h4.400M8.500 8.500L11.500 11.500" stroke="#9096a1" stroke-width="1.200"/></svg>
 <svg class="ic" style="left:247.500px;top:6.500px" width="11" height="11" viewBox="0 0 12 12"><circle cx="5.200" cy="5.200" r="4.400" stroke="#9096a1" stroke-width="1.100" fill="none"/><path d="M3 5.200h4.400M5.200 3v4.400M8.500 8.500L11.500 11.500" stroke="#9096a1" stroke-width="1.200"/></svg>
 <svg class="ic" style="left:264.500px;top:7px" width="10" height="10" viewBox="0 0 12 12"><rect x=".700" y=".700" width="10.600" height="10.600" rx="1" stroke="#9096a1" stroke-width="1.300" fill="none"/><path d="M2.500 9.500v-4l4 4z" fill="#9096a1"/><path d="M6 2.500h3.500V6" stroke="#9096a1" stroke-width="1.200" fill="none"/></svg>
 <span class="abs" style="left:281px;top:4px;font-size:10.3px;color:#9096a1;letter-spacing:-.900px">1:1</span>

</div>
<div id="pvbody">
 
 <svg class="ic" style="left:86.500px;top:43px" width="15" height="10.500" viewBox="0 0 16 12" preserveAspectRatio="none"><rect x=".800" y=".800" width="14.400" height="10.400" rx="1.200" stroke="#2f7df2" stroke-width="1.400" fill="#25324a"/><path d="M3.200 3.800h2.600M4.500 3.800v4" stroke="#2f7df2" stroke-width="1"/></svg>
 <span class="abs" style="left:107px;top:40px;font-size:10.9px;line-height:16px;color:#f4f5f7;-webkit-text-stroke:.3px #f4f5f7;white-space:nowrap">Phone (medium)</span>
 <div class="abs" style="left:102px;top:63px;width:91px;height:25px;background:#3b404b;border-radius:2px"></div>
 <div class="abs" style="left:132px;top:63px;width:1px;height:25px;background:#323641"></div>
 <div class="abs" style="left:162px;top:63px;width:1px;height:25px;background:#323641"></div>
 <svg class="ic" style="left:110px;top:68px" width="14" height="15" viewBox="0 0 14 15"><path d="M12.500 1.200v12.600L1.500 7.500z" stroke="#6f7581" stroke-width="1.300" fill="none" stroke-linejoin="round"/></svg>
 <svg class="ic" style="left:139px;top:68px" width="17" height="15" viewBox="0 0 17 15"><rect x="1" y=".800" width="7" height="13" rx="1.500" stroke="#6f7581" stroke-width="1.300" fill="none"/><path d="M8 8h6.500a1.500 1.500 0 011.500 1.500v3a1.500 1.500 0 01-1.500 1.500H8" stroke="#6f7581" stroke-width="1.300" fill="none"/></svg>
 <svg class="ic" style="left:170px;top:74px" width="15" height="4" viewBox="0 0 15 4"><circle cx="2" cy="2" r="1.300" fill="#6f7581"/><circle cx="7.500" cy="2" r="1.300" fill="#6f7581"/><circle cx="13" cy="2" r="1.300" fill="#6f7581"/></svg>
 <!-- phone -->
 <div class="abs" style="left:242px;top:164.500px;width:4px;height:61px;background:#23252b;border-radius:0 2px 2px 0"></div>
 <div class="abs" style="left:242px;top:237px;width:4px;height:34.500px;background:#23252b;border-radius:0 2px 2px 0"></div>
 <div class="abs" style="left:51px;top:95px;width:191.500px;height:397px;border-radius:10.500px;background:linear-gradient(90deg,#151515 0,#1b1b1b 97%,#3a3a3a 99%,#5a5c60 100%);box-shadow:0 0 0 .600px #4c4f57,0 0 3px rgba(20,22,28,.5)"></div>
 <div class="abs" style="left:57px;top:101px;width:179.300px;height:386px;border-radius:5px;background:#ffffff;overflow:hidden;font-family:'Liberation Sans','Noto Sans CJK SC',sans-serif">
  <svg class="ic" style="left:77px;top:19px" width="25" height="25" viewBox="0 0 25 25"><circle cx="12.500" cy="12.500" r="12.400" fill="#cf2531"/><g fill="#fff"><g id="hwp"><path d="M12.150 17.600C8.900 13.200 8.400 7.600 10.700 3.700c1.600 2.800 1.900 8.400 1.450 13.900z"/><path d="M11.400 17.900C7.300 15.200 4.800 10.600 5.500 6.200c2.800 2.100 5.300 6.400 5.900 11.700z"/><path d="M10.800 18.500C6.600 17.800 3.100 15.100 2.300 11.300c3.200.800 6.600 3.400 8.500 7.200z"/><path d="M10.500 19.200C7.900 20 5.200 19.300 3.500 16.900c2.400-.200 5.200.600 7 2.300z"/></g><g transform="translate(25 0) scale(-1 1)"><path d="M12.150 17.600C8.900 13.200 8.400 7.600 10.700 3.700c1.600 2.800 1.900 8.400 1.450 13.900z"/><path d="M11.400 17.900C7.300 15.200 4.800 10.600 5.500 6.200c2.800 2.100 5.300 6.400 5.900 11.700z"/><path d="M10.800 18.500C6.600 17.800 3.100 15.100 2.300 11.300c3.200.800 6.600 3.400 8.500 7.200z"/><path d="M10.500 19.200C7.900 20 5.200 19.300 3.500 16.900c2.400-.200 5.200.600 7 2.300z"/></g></g></svg>
  <div class="abs" style="left:0;top:45px;width:179px;height:20px;background:#f1f3f5;border-radius:9px"></div>
  <div class="abs" style="left:0;top:65px;width:179px;height:20px;background:#f1f3f5;border-radius:9px"></div>
  <span class="abs" style="left:8px;top:49px;font-size:7.800px;line-height:12px;color:#646669;white-space:nowrap">请输入用户名</span>
  <span class="abs" style="left:8px;top:69px;font-size:7.800px;line-height:12px;color:#646669;white-space:nowrap">请输入密码</span>
  <svg class="ic" style="left:158px;top:70px" width="13" height="11" viewBox="0 0 13 11"><path d="M.800 5.500C2.500 2 10.500 2 12.200 5.500 10.500 9 2.500 9 .800 5.500z" stroke="#1c1c1c" stroke-width="1.100" fill="none"/><circle cx="6.500" cy="5.500" r="1.900" fill="#1c1c1c"/><path d="M1.500.500l10 10" stroke="#1c1c1c" stroke-width="1.200"/></svg>
  <div class="abs" style="left:0;top:85px;width:179px;height:20px;background:#0a7cff;border-radius:10px"></div>
  <span class="abs" style="left:0;top:89px;width:179px;text-align:center;font-size:7.800px;line-height:12px;color:#fff;font-weight:bold">登录</span>
  <span class="abs" style="left:0;top:103px;width:179px;text-align:center;font-size:7.900px;line-height:12px;color:#1e1e1e;white-space:nowrap">前往注册忘记密码</span>
 </div>

</div>
<!-- RIGHT STRIP -->
<div id="rstrip">
 <div class="seltab"></div>
 
 <svg class="ic" style="left:2px;top:9.3px" width="11" height="11" viewBox="0 0 11 11"><circle cx="5.500" cy="5.500" r="4.800" stroke="#c8cacc" stroke-width="1.100" fill="none"/><circle cx="5.500" cy="5.500" r="2" stroke="#c8cacc" stroke-width="1" fill="none"/><path d="M5.500 .700v3M5.500 7.300v3M.700 5.500h3M7.300 5.500h3" stroke="#c8cacc" stroke-width="1"/></svg>
 <div class="vtxt" style="left:15px;top:24px;transform:rotate(90deg);color:#c4c4c4;font-size:9.2px;letter-spacing:-.14px">AppAnalyzer</div>
 <svg class="ic" style="left:2px;top:90px" width="11" height="12" viewBox="0 0 11 12"><path d="M5 1.500c-2.300 0-3.300 1.800-3.300 4v2.200L.500 9.300v.700h9v-.700L8.300 7.700V5.500c0-2.200-1-4-3.300-4z" fill="#c8cacc"/><path d="M3.800 10.600h2.400c0 1.600-2.400 1.600-2.400 0z" fill="#c8cacc"/><circle cx="8.700" cy="2.200" r="2" fill="#e05555"/></svg>
 <div class="vtxt" style="left:15px;top:103.6px;transform:rotate(90deg);color:#c4c4c4;font-size:9.2px;letter-spacing:.2px">Notifications</div>
 <svg class="ic" style="left:2px;top:172px" width="11" height="9" viewBox="0 0 11 9"><path d="M.500 4.500C2 1.200 9 1.200 10.500 4.500 9 7.800 2 7.800.500 4.500z" stroke="#d8dadc" stroke-width="1.100" fill="none"/><circle cx="5.500" cy="4.500" r="1.600" fill="#d8dadc"/></svg>
 <div class="vtxt" style="left:15px;top:184.7px;transform:rotate(90deg);color:#ececec;font-weight:bold;font-size:8.6px;letter-spacing:-.35px">Previewer</div>

</div>

<div class="abs" style="left:1094px;top:534px;white-space:nowrap;font-family:'Noto Sans CJK SC','Liberation Sans',sans-serif;color:#fff;text-shadow:1.800px 1.400px 1px rgba(0,0,0,.45),.800px .800px 0 rgba(0,0,0,.28);line-height:60px;font-size:43px;font-weight:500;-webkit-text-stroke:.5px #fff;letter-spacing:4px">知乎</div>
<div class="abs" style="left:1201.500px;top:532.500px;white-space:nowrap;font-family:'Noto Sans CJK SC','Liberation Sans',sans-serif;color:#fff;text-shadow:1.800px 1.400px 1px rgba(0,0,0,.45),.800px .800px 0 rgba(0,0,0,.28);line-height:60px;font-size:39.600px;letter-spacing:1px;font-weight:400">@wust508</div>

</body>
</html>
